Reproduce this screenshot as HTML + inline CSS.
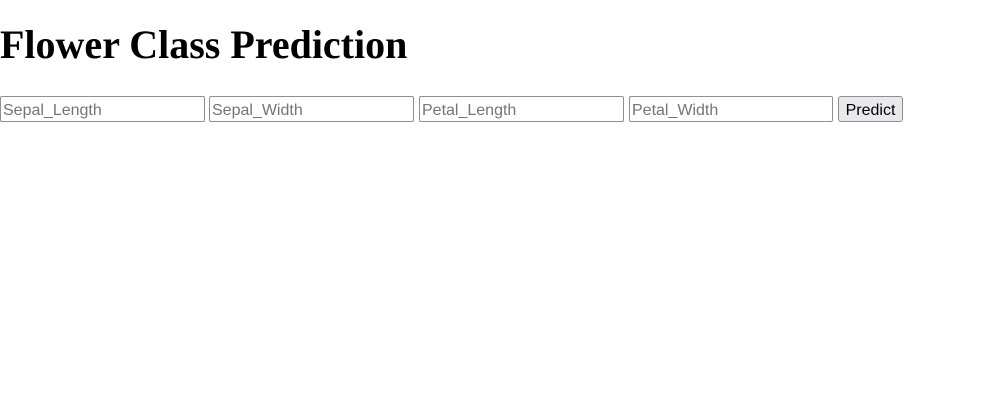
<!DOCTYPE html>
<html><head><style>
body{margin:0;background:#fff;width:998px;height:418px;position:relative;overflow:hidden}
h1{position:absolute;left:0;top:20px;margin:0;font-family:"Liberation Serif",serif;font-weight:bold;font-size:40px;line-height:50px;color:#000}
.in{position:absolute;top:96px;height:26px;box-sizing:border-box;border:1px solid #8f8f8f;border-radius:2px;font-family:"Liberation Sans",sans-serif;font-size:16px;color:#757575;padding:0 2px;line-height:27px;background:#fff}
.btn{position:absolute;left:838px;top:96px;width:65px;height:26px;box-sizing:border-box;border:1px solid #8f8f8f;border-radius:3px;background:#e9e9ed;font-family:"Liberation Sans",sans-serif;font-size:16px;color:#000;text-align:center;line-height:27px}
</style></head><body>
<h1>Flower Class Prediction</h1>
<div class="in" style="left:0;width:205px">Sepal_Length</div>
<div class="in" style="left:209px;width:205px">Sepal_Width</div>
<div class="in" style="left:419px;width:205px">Petal_Length</div>
<div class="in" style="left:629px;width:204px">Petal_Width</div>
<div class="btn">Predict</div>
</body></html>
